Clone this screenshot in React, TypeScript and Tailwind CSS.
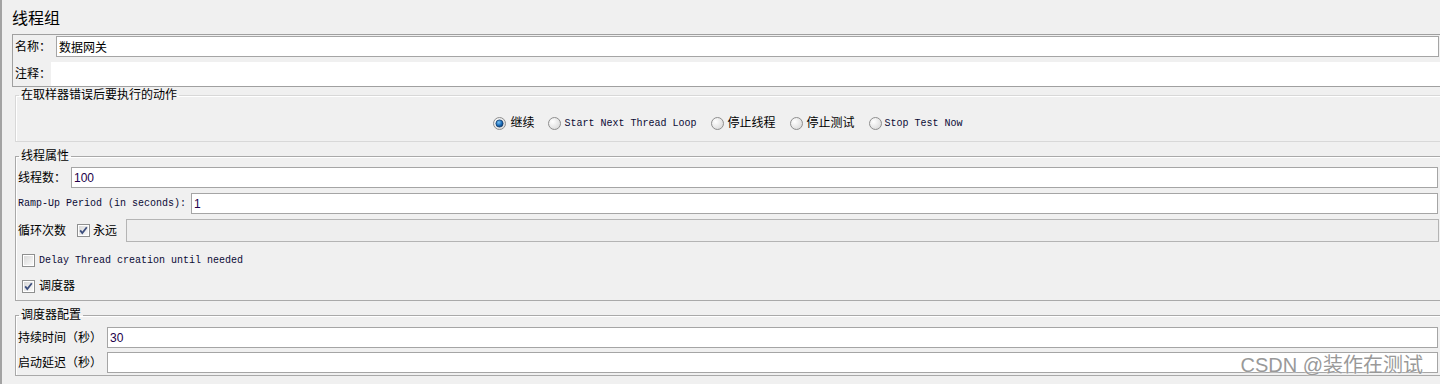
import type { ReactNode } from "react";

const mono = "font-['Liberation_Mono',monospace] text-[10px] text-[#0b0b35]";

const Radio = ({ checked }: { checked?: boolean }) => (
  <svg width="13" height="13" viewBox="0 0 13 13" className="shrink-0">
    <defs>
      <radialGradient id="rOff" cx="0.35" cy="0.35" r="0.8">
        <stop offset="0" stopColor="#ffffff" />
        <stop offset="1" stopColor="#d6d6d6" />
      </radialGradient>
      <radialGradient id="rOn" cx="0.4" cy="0.35" r="0.7">
        <stop offset="0" stopColor="#7cc4f5" />
        <stop offset="0.6" stopColor="#1a6bb8" />
        <stop offset="1" stopColor="#0a3568" />
      </radialGradient>
    </defs>
    <circle cx="6.5" cy="6.5" r="6" fill="url(#rOff)" stroke="#8e8e8e" />
    {checked && <circle cx="6.5" cy="6.5" r="3.6" fill="url(#rOn)" stroke="#17406f" strokeWidth="0.8" />}
  </svg>
);

const Check = ({ checked }: { checked?: boolean }) => (
  <svg width="13" height="13" viewBox="0 0 13 13" className="shrink-0">
    <defs>
      <linearGradient id="cb" x1="0" y1="0" x2="1" y2="1">
        <stop offset="0" stopColor="#d9d9d9" />
        <stop offset="1" stopColor="#f9f9f9" />
      </linearGradient>
    </defs>
    <rect x="0.5" y="0.5" width="12" height="12" fill="#fff" stroke="#8e8f8f" />
    <rect x="2" y="2" width="9" height="9" fill="url(#cb)" />
    {checked && <path d="M3.2 6.4 L5.3 9 L9.8 3.3" fill="none" stroke="#3d4f7e" strokeWidth="1.8" />}
  </svg>
);

const Group = ({ title, light, className, children }: { title: string; light?: boolean; className?: string; children: ReactNode }) => (
  <fieldset
    className={`ml-[3px] w-[1426px] border px-[2px] shadow-[inset_1px_1px_0_#ffffff] ${light ? "border-[#d8d8d8]" : "border-[#a9a9a9]"} ${className ?? ""}`}
  >
    <legend className="ml-[1px] px-[2px] text-[12px] leading-[16px] text-black">{title}</legend>
    {children}
  </fieldset>
);

const Field = ({ value, className }: { value?: string; className?: string }) => (
  <input
    readOnly
    defaultValue={value}
    className={`h-[21px] border border-[#a5a5a5] bg-white px-[2px] text-[12px] text-[#22004a] outline-none ${className ?? ""}`}
  />
);

export default function App() {
  return (
    <div className="relative h-[384px] w-[1440px] overflow-hidden border-l-2 border-[#a3a3a3] bg-[#f0f0f0] pl-[10px] pt-[9px] font-['Liberation_Sans','Noto_Sans_CJK_SC',sans-serif] text-black">
      <div className="h-[20px] text-[16px] leading-[20px]">线程组</div>

      <div className="mt-[5px] w-[1430px] border border-[#a0a0a0] pl-px pt-px">
        <div className="flex h-[21px] items-center">
          <span className="w-[42px] pl-px text-[12px]">名称：</span>
          <Field value="数据网关" className="w-[1383px] text-black" />
        </div>
        <div className="mt-[5px] flex h-[24px] items-center">
          <span className="w-[37px] pl-px text-[12px]">注释：</span>
          <div className="h-full flex-1 bg-white" />
        </div>
      </div>

      <Group title="在取样器错误后要执行的动作" light>
        <div className="my-[9px] flex h-[20px] translate-y-px items-center justify-center gap-[14px]">
          <label className="flex items-center gap-[4px] text-[12px]"><Radio checked />继续</label>
          <label className="flex items-center gap-[3px]"><Radio /><span className={mono}>Start Next Thread Loop</span></label>
          <label className="flex items-center gap-[4px] text-[12px]"><Radio />停止线程</label>
          <label className="flex items-center gap-[4px] text-[12px]"><Radio />停止测试</label>
          <label className="flex items-center gap-[3px]"><Radio /><span className={mono}>Stop Test Now</span></label>
        </div>
      </Group>

      <Group title="线程属性" className="mt-[6px] pb-[2px]">
        <div className="mt-[3px] flex items-center">
          <span className="w-[53px] text-[12px]">线程数：</span>
          <Field value="100" className="w-[1367px]" />
        </div>
        <div className="mt-[5px] flex items-center">
          <span className={`w-[173px] ${mono}`}>Ramp-Up Period (in seconds):</span>
          <Field value="1" className="w-[1247px]" />
        </div>
        <div className="mt-[5px] flex h-[23px] items-center">
          <span className="w-[59px] text-[12px]">循环次数</span>
          <Check checked />
          <span className="ml-[3px] w-[33px] text-[12px]">永远</span>
          <div className="h-[23px] w-[1313px] border border-[#b4b4b4] bg-[#eeeeee]" />
        </div>
        <div className="mt-[6px] flex h-[24px] items-center gap-[4px] pl-[4px]">
          <Check />
          <span className={mono}>Delay Thread creation until needed</span>
        </div>
        <div className="mt-[2px] flex h-[24px] items-center gap-[4px] pl-[4px]">
          <Check checked />
          <span className="text-[12px]">调度器</span>
        </div>
      </Group>

      <Group title="调度器配置" className="mt-[6px] pb-[2px]">
        <div className="mt-[4px] flex items-center">
          <span className="w-[89px] text-[12px]">持续时间（秒）</span>
          <Field value="30" className="w-[1331px]" />
        </div>
        <div className="mt-[4px] flex items-center">
          <span className="w-[89px] text-[12px]">启动延迟（秒）</span>
          <Field className="w-[1331px]" />
        </div>
      </Group>

      <div className="absolute bottom-[7px] right-[17px] text-[20px] leading-[24px] text-[#999999] [text-shadow:0_0_2px_#ffffff]">
        CSDN @装作在测试
      </div>
    </div>
  );
}
